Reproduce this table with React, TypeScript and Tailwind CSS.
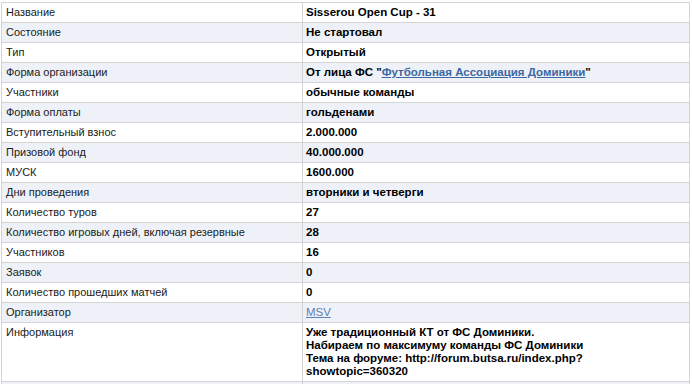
const rows: { label: string; value: React.ReactNode }[] = [
  { label: 'Название', value: 'Sisserou Open Cup - 31' },
  { label: 'Состояние', value: 'Не стартовал' },
  { label: 'Тип', value: 'Открытый' },
  {
    label: 'Форма организации',
    value: (
      <>
        От лица ФС "<a href="#" className="text-[#3d67a0] underline">Футбольная Ассоциация Доминики</a>"
      </>
    ),
  },
  { label: 'Участники', value: 'обычные команды' },
  { label: 'Форма оплаты', value: 'гольденами' },
  { label: 'Вступительный взнос', value: '2.000.000' },
  { label: 'Призовой фонд', value: '40.000.000' },
  { label: 'МУСК', value: '1600.000' },
  { label: 'Дни проведения', value: 'вторники и четверги' },
  { label: 'Количество туров', value: '27' },
  { label: 'Количество игровых дней, включая резервные', value: '28' },
  { label: 'Участников', value: '16' },
  { label: 'Заявок', value: '0' },
  { label: 'Количество прошедших матчей', value: '0' },
  {
    label: 'Организатор',
    value: <a href="#" className="font-normal text-[#5b80b4] underline">MSV</a>,
  },
  {
    label: 'Информация',
    value: (
      <>
        Уже традиционный КТ от ФС Доминики.
        <br />
        Набираем по максимуму команды ФС Доминики
        <br />
        Тема на форуме: http://forum.butsa.ru/index.php?
        <br />
        showtopic=360320
      </>
    ),
  },
  { label: '', value: '' },
];

export default function App() {
  return (
    <div className="bg-white pt-[2px] pl-px font-['Liberation_Sans',Arial,sans-serif] text-[11.5px] leading-[13px] text-black">
      <table className="w-[689px] border-collapse">
        <tbody>
          {rows.map((row, i) => (
            <tr key={i} className={i % 2 === 1 ? 'bg-[#eef2f8]' : 'bg-white'}>
              <td className="w-[301px] border border-[#d4d4d4] px-[4px] py-[3px] align-top text-[11px] text-[#1a1a1a]">
                {row.label || '\u00a0'}
              </td>
              <td className="border border-[#d4d4d4] px-[3px] py-[3px] align-top font-bold">
                {row.value || '\u00a0'}
              </td>
            </tr>
          ))}
        </tbody>
      </table>
    </div>
  );
}
